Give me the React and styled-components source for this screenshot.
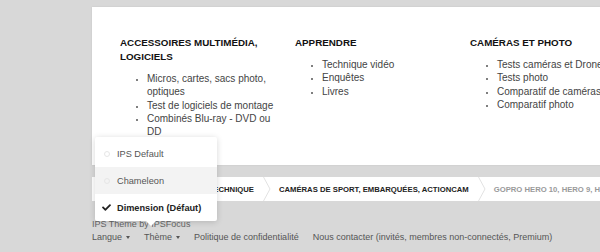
import React from "react";
import styled, { createGlobalStyle } from "styled-components";
import { FaCheck, FaHome } from "react-icons/fa";

const GlobalStyle = createGlobalStyle`
  html, body {
    margin: 0;
    padding: 0;
    width: 600px;
    height: 252px;
    overflow: hidden;
    background: #d8d8d8;
    font-family: "Liberation Sans", Arial, sans-serif;
    color: #333;
  }
`;

const Page = styled.div`
  position: relative;
  width: 600px;
  height: 252px;
  overflow: hidden;
  padding: 7px 0 0 92px;
  box-sizing: border-box;
`;

const MegaMenu = styled.div`
  width: 560px;
  background: #fff;
  box-shadow: 0 0 2px rgba(0, 0, 0, 0.08);
  padding: 29px 28px 27px;
  box-sizing: border-box;
  display: grid;
  grid-template-columns: 160px 160px 160px;
  column-gap: 15px;
`;

const Column = styled.div``;

const ColTitle = styled.div`
  font-size: 9.8px;
  font-weight: bold;
  line-height: 14px;
  color: #111;
  text-transform: uppercase;
`;

const Links = styled.ul`
  margin: 8px 0 0;
  padding: 0 0 0 27px;
  list-style: disc;
  font-size: 10px;
  line-height: 13.3px;
  color: #444;

  li::marker {
    font-size: 8px;
    color: #555;
  }
`;

const Breadcrumb = styled.nav`
  margin-top: 12px;
  width: 560px;
  height: 24px;
  background: #fff;
  display: flex;
  align-items: stretch;
`;

const Crumb = styled.div`
  display: flex;
  align-items: center;
  padding: 0 9px 0 ${(p) => (p.$first ? "22px" : "8px")};
  font-size: 7.7px;
  font-weight: bold;
  text-transform: uppercase;
  white-space: nowrap;
  color: ${(p) => (p.$current ? "#9a9a9a" : "#222")};
`;

const Chevron = () => (
  <svg width="8" height="24" viewBox="0 0 8 24">
    <polyline points="0.5,0 7,12 0.5,24" fill="none" stroke="#e2e2e2" strokeWidth="1" />
  </svg>
);

const Footer = styled.footer`
  margin-top: 17px;
  font-size: 9px;
  line-height: 13px;
  color: #666;
`;

const FooterLinks = styled.div`
  display: flex;
  gap: 14px;
  color: #555;
`;

const FooterLink = styled.span`
  display: inline-flex;
  align-items: center;
`;

const Caret = styled.i`
  display: inline-block;
  margin-left: 4px;
  border-left: 2.5px solid transparent;
  border-right: 2.5px solid transparent;
  border-top: 3px solid #555;
`;

const Menu = styled.div`
  position: absolute;
  left: 95px;
  top: 137px;
  width: 122px;
  padding-top: 3px;
  background: #fff;
  border-radius: 2px;
  box-shadow: 0 1px 6px rgba(0, 0, 0, 0.16);

  &::after {
    content: "";
    position: absolute;
    left: 51px;
    bottom: -5px;
    border-left: 5px solid transparent;
    border-right: 5px solid transparent;
    border-top: 5px solid #fff;
  }
`;

const MenuItem = styled.div`
  height: 27px;
  display: flex;
  align-items: center;
  gap: 5px;
  padding-left: 6px;
  font-size: 9.2px;
  font-weight: ${(p) => (p.$selected ? "bold" : "normal")};
  color: ${(p) => (p.$selected ? "#222" : "#555")};
  background: ${(p) => (p.$hover ? "#f3f3f3" : "transparent")};
`;

const Mark = styled.span`
  width: 11px;
  display: flex;
  justify-content: center;
  align-items: center;
`;

const Radio = styled.span`
  width: 6px;
  height: 6px;
  border-radius: 50%;
  border: 1px solid #e6e6e6;
  box-sizing: border-box;
`;

const columns = [
  {
    title: "Accessoires multimédia, logiciels",
    links: [
      "Micros, cartes, sacs photo, optiques",
      "Test de logiciels de montage",
      "Combinés Blu-ray - DVD ou DD",
    ],
  },
  {
    title: "Apprendre",
    links: ["Technique vidéo", "Enquêtes", "Livres"],
  },
  {
    title: "Caméras et photo",
    links: [
      "Tests caméras et Drones",
      "Tests photo",
      "Comparatif de caméras",
      "Comparatif photo",
    ],
  },
];

const themes = [
  { name: "IPS Default" },
  { name: "Chameleon", hover: true },
  { name: "Dimension (Défaut)", selected: true },
];

export default function App() {
  return (
    <>
      <GlobalStyle />
      <Page>
        <MegaMenu>
          {columns.map((col) => (
            <Column key={col.title}>
              <ColTitle>{col.title}</ColTitle>
              <Links>
                {col.links.map((l) => (
                  <li key={l}>{l}</li>
                ))}
              </Links>
            </Column>
          ))}
        </MegaMenu>

        <Breadcrumb>
          <Crumb $first>
            <FaHome size={10} />
          </Crumb>
          <Chevron />
          <Crumb>Vidéo, photo, technique</Crumb>
          <Chevron />
          <Crumb>Caméras de sport, embarquées, actioncam</Crumb>
          <Chevron />
          <Crumb $current>GoPro Hero 10, Hero 9, Hero 8</Crumb>
        </Breadcrumb>

        <Footer>
          <div>IPS Theme by IPSFocus</div>
          <FooterLinks>
            <FooterLink>
              Langue <Caret />
            </FooterLink>
            <FooterLink>
              Thème <Caret />
            </FooterLink>
            <FooterLink>Politique de confidentialité</FooterLink>
            <FooterLink>Nous contacter (invités, membres non-connectés, Premium)</FooterLink>
          </FooterLinks>
        </Footer>

        <Menu>
          {themes.map((t) => (
            <MenuItem key={t.name} $hover={t.hover} $selected={t.selected}>
              <Mark>{t.selected ? <FaCheck size={9} color="#222" /> : <Radio />}</Mark>
              {t.name}
            </MenuItem>
          ))}
        </Menu>
      </Page>
    </>
  );
}
